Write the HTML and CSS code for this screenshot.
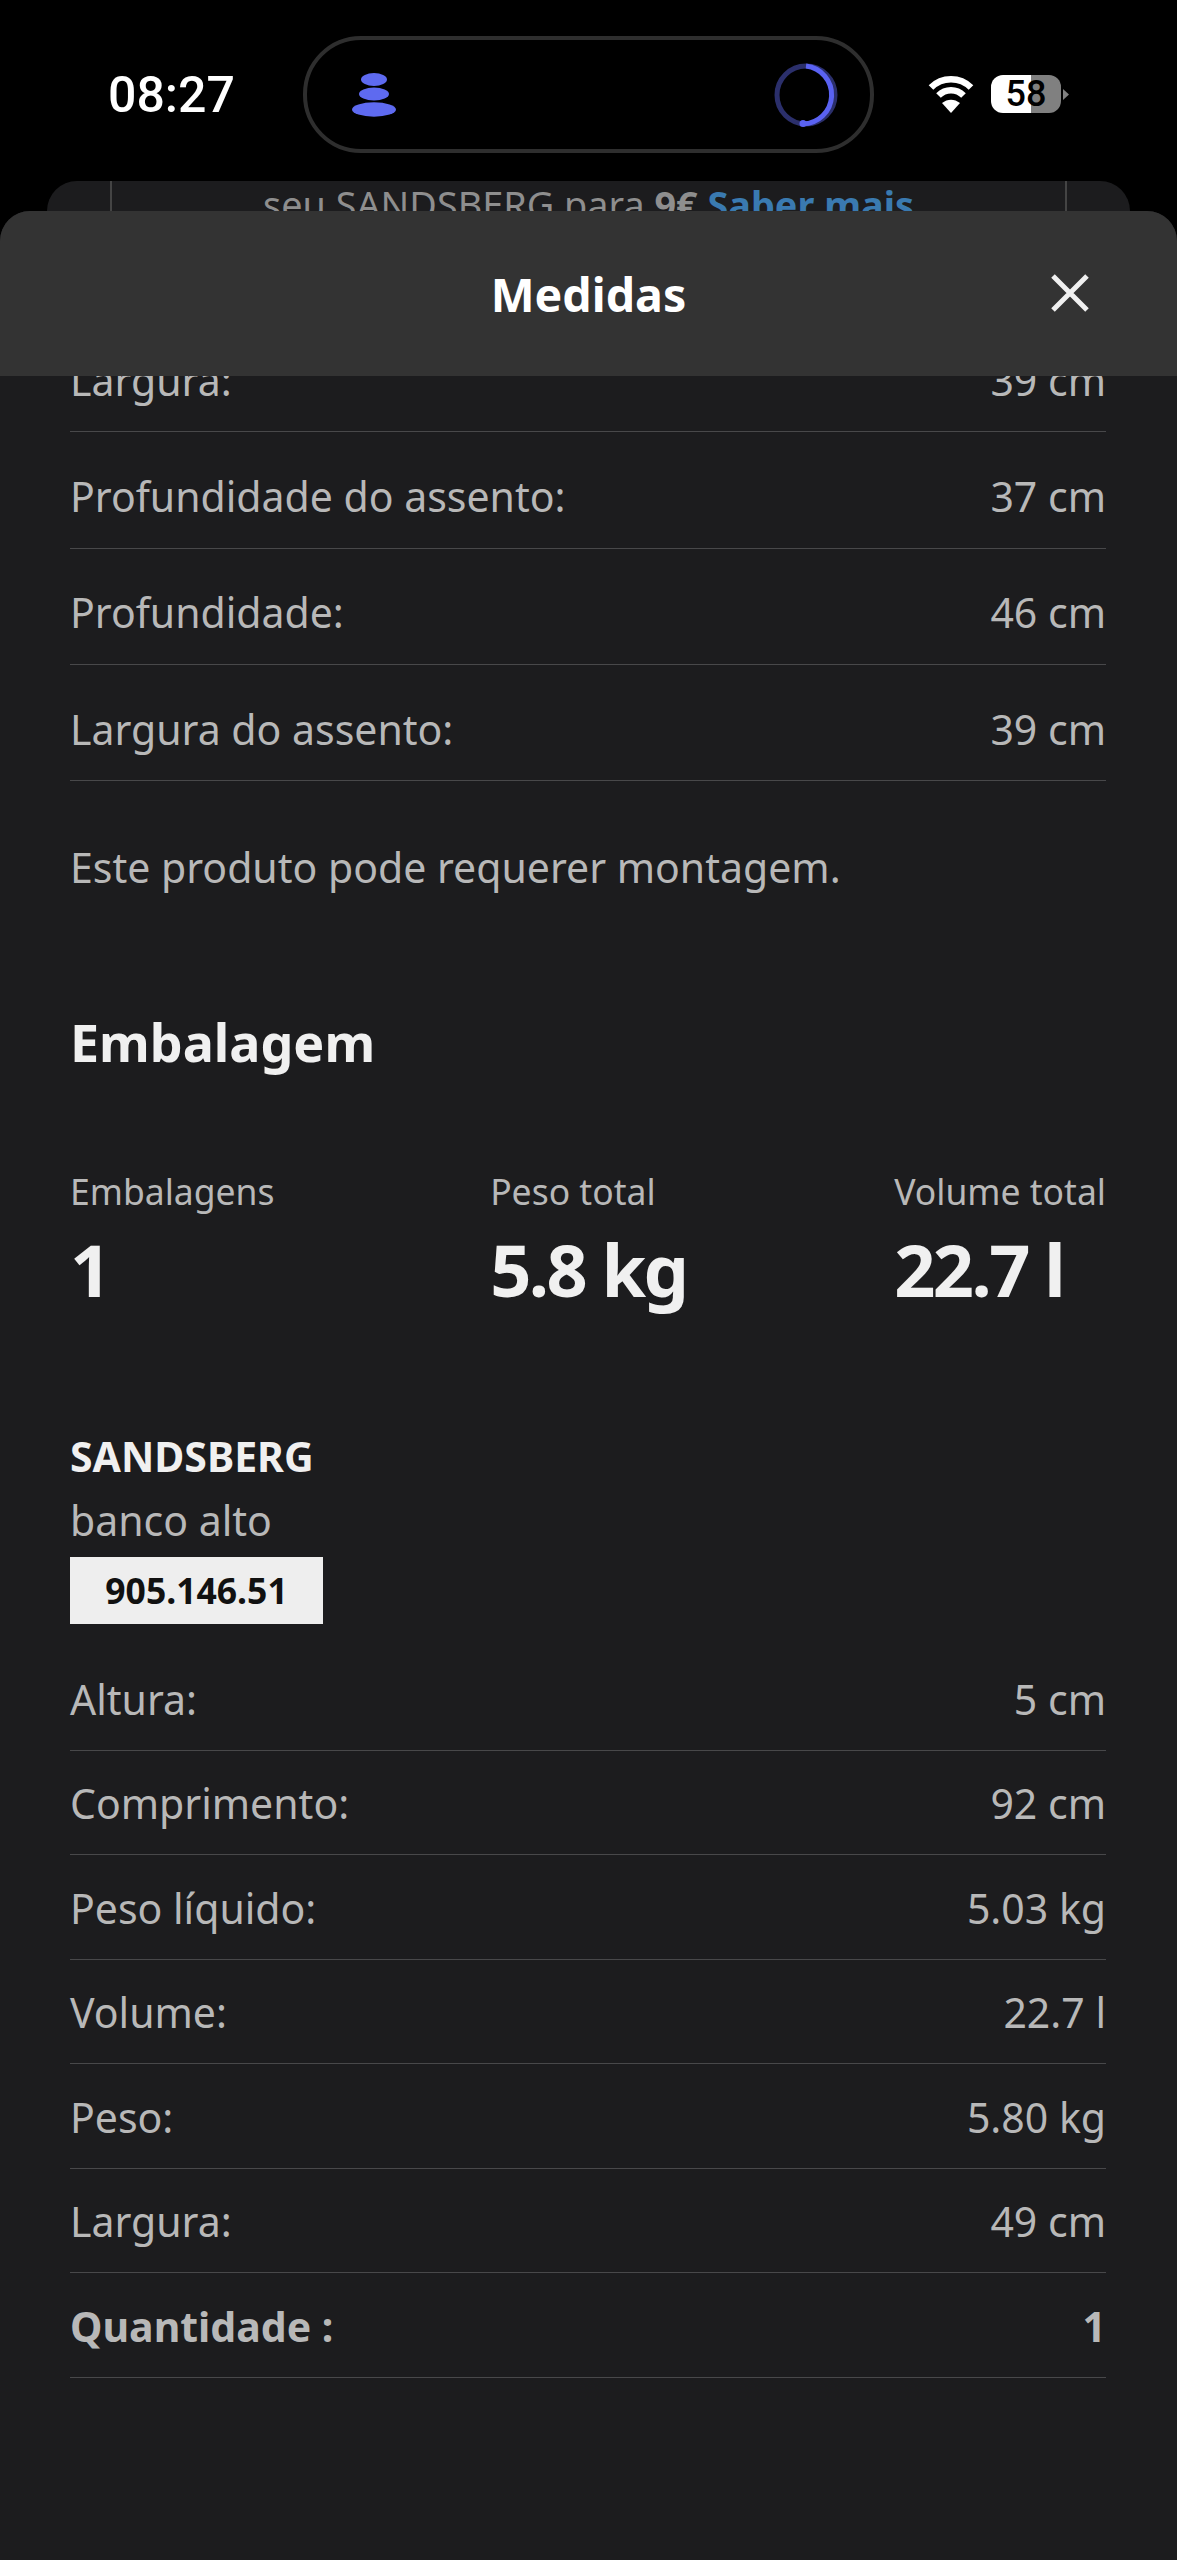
FILE: index.html
```html
<!DOCTYPE html>
<html lang="pt">
<head>
<meta charset="utf-8">
<title>Medidas</title>
<link rel="stylesheet" href="styles.css">
</head>
<body>
<div class="status">
  <span class="time">08:27</span>
  <div class="island">
    <svg class="stones" width="44" height="44" viewBox="0 0 44 44"><ellipse cx="22" cy="6.500" rx="13" ry="6.500" fill="#5e6af0"/><ellipse cx="22" cy="21" rx="15" ry="6.500" fill="#5e6af0"/><ellipse cx="22" cy="36.500" rx="22" ry="7.200" fill="#5e6af0"/></svg>
    <svg class="ring" width="64" height="64" viewBox="0 0 64 64"><circle cx="32" cy="32" r="29" fill="none" stroke="#2b2f6b" stroke-width="5"/><path d="M32 3A29 29 0 0 1 29 60.800" fill="none" stroke="#5a62f2" stroke-width="5"/><circle cx="29" cy="60.500" r="3.500" fill="#5a62f2"/></svg>
  </div>
  <svg class="wifi" width="46" height="40" viewBox="0 0 46 40"><path d="M3 13.500C14 2.500 32 2.500 43 13.500" fill="none" stroke="#fff" stroke-width="6.500"/><path d="M10.500 21.500C17.500 14.500 28.500 14.500 35.500 21.500" fill="none" stroke="#fff" stroke-width="6.500"/><path d="M23 39L14 29C19.500 24.500 26.500 24.500 32 29Z" fill="#fff"/></svg>
  <div class="battery"><span class="level">58</span></div>
  <svg class="nub" width="6" height="11" viewBox="0 0 6 11"><path d="M0 0L6 5.500L0 11Z" fill="#808080"/></svg>
</div>
<div class="banner">
  <div class="banner-inner">seu SANDSBERG para <b>9€</b> <b class="link">Saber mais</b></div>
</div>
<section class="sheet">
  <header class="sheet-head">
    <h1 class="sheet-title">Medidas</h1>
    <svg class="close" width="40" height="40" viewBox="0 0 40 40"><path d="M3 3L37 37M37 3L3 37" stroke="#f0f0f0" stroke-width="5" fill="none"/></svg>
  </header>
  <div class="content">
    <ul class="dims">
      <li class="row"><span>Largura:</span><span>39 cm</span></li>
      <li class="row"><span>Profundidade do assento:</span><span>37 cm</span></li>
      <li class="row"><span>Profundidade:</span><span>46 cm</span></li>
      <li class="row"><span>Largura do assento:</span><span>39 cm</span></li>
    </ul>
    <p class="note">Este produto pode requerer montagem.</p>
    <h2 class="section">Embalagem</h2>
    <div class="stats">
      <div class="stat"><div class="stat-label">Embalagens</div><div class="stat-value">1</div></div>
      <div class="stat stat-mid"><div class="stat-label">Peso total</div><div class="stat-value">5.8 kg</div></div>
      <div class="stat"><div class="stat-label">Volume total</div><div class="stat-value">22.7 l</div></div>
    </div>
    <div class="product-name">SANDSBERG</div>
    <div class="product-type">banco alto</div>
    <div class="tag">905.146.51</div>
    <ul class="pack">
      <li class="row"><span>Altura:</span><span>5 cm</span></li>
      <li class="row"><span>Comprimento:</span><span>92 cm</span></li>
      <li class="row"><span>Peso líquido:</span><span>5.03 kg</span></li>
      <li class="row"><span>Volume:</span><span>22.7 l</span></li>
      <li class="row"><span>Peso:</span><span>5.80 kg</span></li>
      <li class="row"><span>Largura:</span><span>49 cm</span></li>
      <li class="row strong"><span>Quantidade :</span><span>1</span></li>
    </ul>
  </div>
</section>
</body>
</html>
```
FILE: styles.css
```css
* { box-sizing: border-box; }
html, body { margin: 0; padding: 0; }
body {
  width: 1177px;
  height: 2560px;
  overflow: hidden;
  background: #000;
  font-family: "Noto Sans", sans-serif;
  color: #b8b8b8;
}
.status {
  height: 181px;
  padding: 36px 0 0 108px;
  display: flex;
  align-items: flex-start;
  background: #000;
}
.time {
  width: 195px;
  height: 118px;
  line-height: 118px;
  font-family: Roboto, sans-serif;
  font-weight: 500;
  font-size: 50px;
  color: #fff;
}
.island {
  width: 571px;
  height: 117px;
  border: 4px solid #2e2e2e;
  border-radius: 58px;
  padding: 0 32px 0 45px;
  display: flex;
  align-items: center;
  justify-content: space-between;
}
.wifi { margin: 38px 0 0 54px; }
.battery {
  width: 70px;
  height: 38px;
  margin: 39px 0 0 17px;
  border-radius: 12px;
  background: linear-gradient(90deg, #fff 57%, #808080 57%);
  text-align: center;
}
.level {
  display: block;
  font-family: Roboto, sans-serif;
  font-weight: 500;
  font-size: 36px;
  line-height: 38px;
  color: #000;
}
.nub { margin: 53px 0 0 2px; }
.banner {
  height: 60px;
  margin: 0 47px;
  padding: 0 63px;
  border-radius: 30px 30px 0 0;
  background: #1c1c1e;
}
.banner-inner {
  height: 60px;
  border-left: 2px solid #444;
  border-right: 2px solid #444;
  text-align: center;
  font-size: 37.8px;
  line-height: 48px;
  color: #8e8e8e;
}
.link { color: #3a7ab0; }
.sheet {
  height: 2349px;
  margin-top: -30px;
  position: relative;
  border-radius: 30px 30px 0 0;
  background: #1c1c1e;
  overflow: hidden;
}
.sheet-head {
  position: relative;
  z-index: 1;
  height: 165px;
  display: flex;
  align-items: center;
  justify-content: center;
  background: #333;
}
.sheet-title {
  margin: 0;
  font-size: 46.500px;
  font-weight: 700;
  color: #fff;
}
.close { position: absolute; right: 87px; top: 62px; }
.content { padding: 0 71px 0 70px; margin-top: -60px; }
ul { list-style: none; margin: 0; padding: 0; }
.row {
  display: flex;
  justify-content: space-between;
  align-items: center;
  border-bottom: 1px solid #48484a;
  font-size: 41px;
}
.dims .row { height: 116.300px; padding-top: 12px; }
.pack .row { height: 104.500px; padding-top: 2px; }
.strong { font-weight: 700; }
.note { margin: 0; padding-top: 58px; font-size: 41px; line-height: 56px; }
.section {
  margin: 0;
  padding-top: 113px;
  font-size: 52px;
  line-height: 68px;
  font-weight: 700;
  color: #f0f0f0;
}
.stats {
  display: flex;
  justify-content: space-between;
  padding-top: 91px;
}
.stat-mid { margin-left: 8px; }
.stat-label { font-size: 35.500px; line-height: 48px; }
.stat-value { font-size: 72px; line-height: 90px; font-weight: 700; letter-spacing: -2.500px; color: #f0f0f0; margin-top: 9px; }
.product-name { margin-top: 116px; font-size: 41px; line-height: 52px; font-weight: 700; color: #f0f0f0; }
.product-type { font-size: 41px; line-height: 56px; margin-top: 10px; }
.tag {
  width: 253px;
  height: 67px;
  margin-top: 9px;
  background: #eeeeee;
  color: #111;
  text-align: center;
  font-size: 35.500px;
  line-height: 67px;
  font-weight: 700;
}
.pack { margin-top: 22px; }
```
